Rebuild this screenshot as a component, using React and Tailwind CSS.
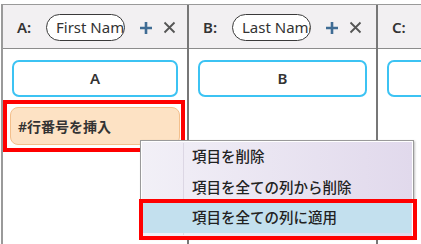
const FONT = { fontFamily: '"Noto Sans", "Noto Sans CJK JP", sans-serif' }

function PlusIcon() {
  return (
    <svg width="14" height="14" viewBox="0 0 14 14" className="shrink-0">
      <path d="M7 1v12M1 7h12" stroke="#3f6c94" strokeWidth="2.6" strokeLinecap="butt" />
    </svg>
  )
}

function CloseIcon() {
  return (
    <svg width="13" height="13" viewBox="0 0 13 13" className="shrink-0">
      <path d="M1.5 1.5l10 10M11.5 1.5l-10 10" stroke="#555" strokeWidth="1.8" />
    </svg>
  )
}

function ColumnHeader({ letter, name }) {
  return (
    <div className="flex h-[44px] items-center border-b border-[#8c8c8c] bg-[#f2f0f2] pl-[14px] pt-[2px]">
      <span className="w-[29px] shrink-0 text-[15px] font-semibold text-[#333]">{letter}:</span>
      <div className="flex h-[27px] w-[79px] shrink-0 items-center overflow-hidden whitespace-nowrap rounded-full border-[1.5px] border-[#3a3a3a] bg-white pl-[9px] text-[15px] text-[#333]">
        {name}
      </div>
      <span className="ml-[14px]">
        <PlusIcon />
      </span>
      <span className="ml-[10px]">
        <CloseIcon />
      </span>
    </div>
  )
}

function KeyButton({ label }) {
  return (
    <div className="mx-[9px] mt-[11px] flex h-[37px] items-center justify-center rounded-[7px] border-2 border-[#3cc3f3] bg-white text-[15px] font-semibold text-[#333]">
      {label}
    </div>
  )
}

export default function App() {
  return (
    <div className="relative h-[244px] w-[421px] overflow-hidden bg-white" style={FONT}>
      <div className="ml-[1px] mt-[4px] flex h-[240px] border-l-2 border-t border-[#9a9a9a]">
        <div className="w-[186px] shrink-0 border-r-2 border-[#777]">
          <ColumnHeader letter="A" name="First Name" />
          <KeyButton label="A" />
          <div className="mt-[3px] w-[182px] border-4 border-[#ff0000] p-[3px] pr-[1px]">
            <div className="flex h-[38px] items-center rounded-[8px] border border-[#f3bf8b] bg-[#fde2c4] pl-[7px] text-[14px] font-semibold text-[#333]">
              #行番号を挿入
            </div>
          </div>
        </div>
        <div className="w-[189px] shrink-0 border-r-2 border-[#777]">
          <ColumnHeader letter="B" name="Last Name" />
          <KeyButton label="B" />
        </div>
        <div className="w-[200px] shrink-0">
          <ColumnHeader letter="C" name="Email" />
          <KeyButton label="C" />
        </div>
      </div>

      <div className="absolute left-[140px] top-[140px] h-[98px] w-[274px] border border-[#9a9a9a] bg-gradient-to-r from-[#f2f0f7] to-[#e1d9ec] shadow-[1px_1px_2px_rgba(0,0,0,0.25)]">
        <div className="absolute inset-0 border border-white" />
        <div className="absolute bottom-[2px] left-[42px] top-[2px] w-px bg-[#dcd7e4]" />
        <div className="relative flex flex-col pt-[1px] text-[14.5px] font-medium text-[#222]">
          <div className="flex h-[30px] items-center pl-[51px]">項目を削除</div>
          <div className="flex h-[31px] items-center pl-[51px]">項目を全ての列から削除</div>
          <div className="mx-[2px] flex h-[30px] items-center bg-[#c3e0ee] pl-[49px]">項目を全ての列に適用</div>
        </div>
      </div>
      <div className="absolute left-[139px] top-[199px] h-[41px] w-[278px] border-4 border-[#ff0000]" />
    </div>
  )
}
